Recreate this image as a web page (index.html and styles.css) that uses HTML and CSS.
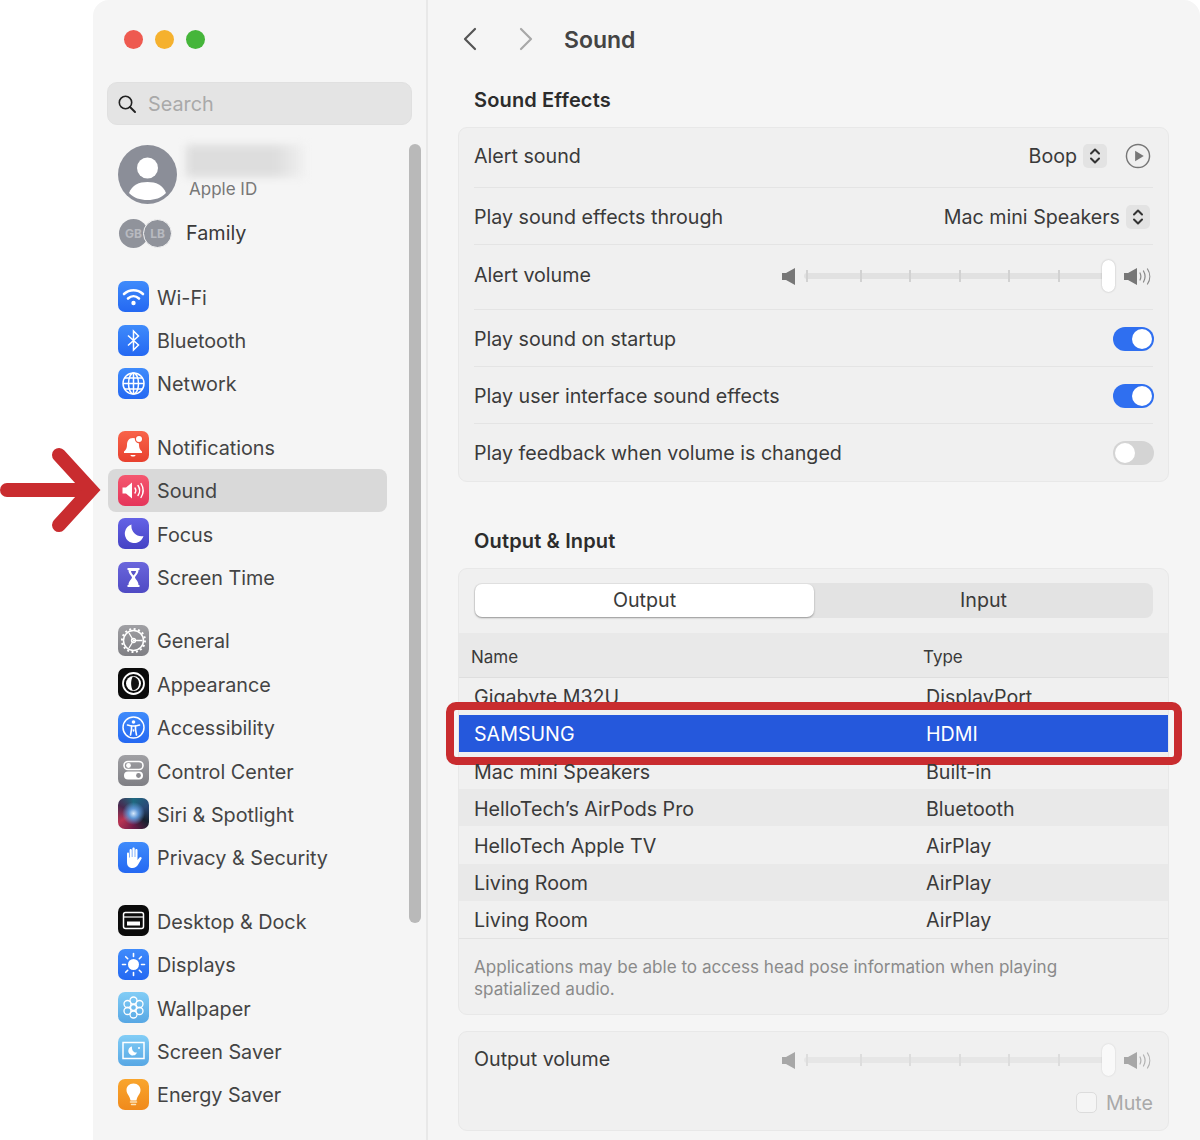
FILE: index.html
```html
<!DOCTYPE html>
<html lang="en">
<head>
    <meta charset="UTF-8">
    <meta name="viewport" content="width=device-width, initial-scale=1.0">
    <title>Sound - System Settings</title>
    <link rel="stylesheet" href="styles.css">
</head>
<body>
    <!-- Red annotation arrow -->
    <svg class="arrow" width="112" height="90" viewBox="0 0 112 90">
        <path d="M7 45H86" fill="none" stroke="#c92c2f" stroke-width="14" stroke-linecap="round"/>
        <path d="M59 10L91 45L59 80" fill="none" stroke="#c92c2f" stroke-width="14" stroke-linecap="round" stroke-linejoin="miter"/>
    </svg>

    <div class="window">
        <!-- Sidebar -->
        <aside class="sidebar">
            <div class="lights">
                <span class="light red"></span>
                <span class="light yellow"></span>
                <span class="light green"></span>
            </div>
            <div class="search">
                <svg width="20" height="20" viewBox="0 0 20 20"><circle cx="8.5" cy="8.5" r="6.2" fill="none" stroke="#222" stroke-width="1.6"/><path d="M13 13l5 5" stroke="#222" stroke-width="2" stroke-linecap="round"/></svg>
                <span>Search</span>
            </div>
            <div class="scrollbar"></div>

            <div class="profile">
                <svg class="avatar" width="59" height="59" viewBox="0 0 59 59">
                    <circle cx="29.5" cy="29.5" r="29.5" fill="#8b8e98"/>
                    <circle cx="29.5" cy="23" r="10.5" fill="#fff"/>
                    <path d="M11 48c3-8 10-11 18.500-11S45 40 48 48c-5 5-11 7-18.500 7S16 53 11 48z" fill="#fff"/>
                </svg>
                <div class="profile-text">
                    <div class="blurred"></div>
                    <div class="apple-id">Apple ID</div>
                </div>
            </div>
            <div class="family">
                <div class="family-faces">
                    <span class="face">GB</span>
                    <span class="face second">LB</span>
                </div>
                <span>Family</span>
            </div>

            <nav class="group">
                <a class="item"><span class="icon blue"><svg viewBox="0 0 31 31"><g fill="none" stroke="#fff" stroke-width="2.6" stroke-linecap="round"><path d="M6 13c5.500-5 13.500-5 19 0"/><path d="M10 17.500c3.300-3 7.700-3 11 0"/></g><circle cx="15.500" cy="22" r="2.200" fill="#fff"/></svg></span>Wi-Fi</a>
                <a class="item"><span class="icon blue"><svg viewBox="0 0 31 31"><path d="M10 10.500L20.500 20L15.500 25V6L20.500 11L10 20.500" fill="none" stroke="#fff" stroke-width="1.500"/></svg></span>Bluetooth</a>
                <a class="item"><span class="icon blue"><svg viewBox="0 0 31 31"><g fill="none" stroke="#fff" stroke-width="1.500"><circle cx="15.500" cy="15.500" r="10.500"/><ellipse cx="15.500" cy="15.500" rx="5" ry="10.500"/><path d="M5 15.500h21M7 10h17M7 21h17M15.500 5v21"/></g></svg></span>Network</a>
            </nav>

            <nav class="group">
                <a class="item"><span class="icon red-orange"><svg viewBox="0 0 31 31"><path d="M15 7c-4.500 0-6 3.500-6 7 0 3-1 5-3 6.500V22h18v-1.500c-2-1.500-3-3.500-3-6.500 0-3.500-1.500-7-6-7z" fill="#fff"/><path d="M12.500 24h5c0 2-5 2-5 0z" fill="#fff"/><circle cx="21" cy="8" r="4.200" fill="#f0543c"/><circle cx="21" cy="8" r="3" fill="#fff"/></svg></span>Notifications</a>
                <a class="item selected"><span class="icon pink"><svg viewBox="0 0 31 31"><path d="M4.500 12.500h3.500l6-5v16l-6-5H4.500z" fill="#fff"/><g fill="none" stroke="#fff" stroke-width="1.400" stroke-linecap="round"><path d="M17 13c1 1.500 1 3.500 0 5"/><path d="M20 10.500c2 3 2 7 0 10"/><path d="M23 8.500c2.800 4.500 2.800 9.500 0 14"/></g></svg></span>Sound</a>
                <a class="item"><span class="icon indigo"><svg viewBox="0 0 31 31"><path d="M13.500 6.500a9.500 9.500 0 1 0 12 11.500c-6.500 1.500-13-4-12-11.500z" fill="#fff"/></svg></span>Focus</a>
                <a class="item"><span class="icon indigo-light"><svg viewBox="0 0 31 31"><path d="M9.500 6h12v2h-1c0 4-3 5.500-3.500 7.500.5 2 3.500 3.500 3.500 7.500h1v2h-12v-2h1c0-4 3-5.500 3.500-7.500-.5-2-3.500-3.500-3.500-7.500h-1z" fill="#fff"/><path d="M13 9h5c0 2-1.500 3-2.500 4.500C14.500 12 13 11 13 9z" fill="#5a55c8"/></svg></span>Screen Time</a>
            </nav>

            <nav class="group">
                <a class="item"><span class="icon gray"><svg viewBox="0 0 31 31"><g fill="none" stroke="#fff"><circle cx="15.500" cy="15.500" r="10" stroke-width="1.500"/><circle cx="15.500" cy="15.500" r="11.500" stroke-width="2" stroke-dasharray="2 2.500"/><path d="M11 8l4.500 7.500h9M15.500 15.500L11 23" stroke-width="1.300"/><circle cx="15.500" cy="15.500" r="2" stroke-width="1.300"/></g></svg></span>General</a>
                <a class="item"><span class="icon black"><svg viewBox="0 0 31 31"><circle cx="15.500" cy="15.500" r="10.500" fill="none" stroke="#fff" stroke-width="1.800"/><circle cx="15.500" cy="15.500" r="7.500" fill="#fff"/><path d="M15 8.500c-2.500 3-2.500 11 0 14c4-1 6-3.500 6-7s-2-6-6-7z" fill="#111"/></svg></span>Appearance</a>
                <a class="item"><span class="icon blue"><svg viewBox="0 0 31 31"><circle cx="15.500" cy="15.500" r="10.500" fill="none" stroke="#fff" stroke-width="1.500"/><circle cx="15.500" cy="10" r="1.800" fill="#fff"/><path d="M9.500 13l4 1v3.500L12.500 23M21.500 13l-4 1v3.500l1 5.500M13.500 14h4M15.500 18v1" fill="none" stroke="#fff" stroke-width="1.600" stroke-linecap="round"/></svg></span>Accessibility</a>
                <a class="item"><span class="icon gray"><svg viewBox="0 0 31 31"><rect x="6" y="6.500" width="19" height="8" rx="4" fill="none" stroke="#fff" stroke-width="1.600"/><circle cx="10.500" cy="10.500" r="2.400" fill="#fff"/><rect x="6" y="16.500" width="19" height="8" rx="4" fill="#fff"/><circle cx="20.500" cy="20.500" r="2.400" fill="#8a8a8f"/></svg></span>Control Center</a>
                <a class="item"><span class="icon siri"></span>Siri &amp; Spotlight</a>
                <a class="item"><span class="icon blue"><svg viewBox="0 0 31 31"><path d="M9 11.500c0-1.500 2-1.500 2 0v4h.6V8c0-1.500 2.200-1.500 2.200 0v7h.6V6.500c0-1.500 2.300-1.500 2.300 0v8.500h.6V8c0-1.500 2.200-1.500 2.200 0v10l2-2.500c1-1.300 2.800 0 2 1.300l-3.500 6c-1 2-3 3.200-5.500 3.200-4 0-5.500-2.500-5.500-6z" fill="#fff"/></svg></span>Privacy &amp; Security</a>
            </nav>

            <nav class="group">
                <a class="item"><span class="icon black"><svg viewBox="0 0 31 31"><rect x="5.500" y="7.500" width="20" height="16" rx="2" fill="none" stroke="#fff" stroke-width="1.500"/><path d="M5.500 12h20" stroke="#fff" stroke-width="1.200"/><rect x="9" y="16.500" width="13" height="4" fill="#fff"/></svg></span>Desktop &amp; Dock</a>
                <a class="item"><span class="icon blue"><svg viewBox="0 0 31 31"><circle cx="15.500" cy="15.500" r="5.500" fill="#fff"/><path d="M15.500 4.500v3M15.500 23.500v3M4.500 15.500h3M23.500 15.500h3M7.700 7.700l2 2M21.300 21.300l2 2M7.700 23.300l2-2M21.300 9.700l2-2" stroke="#fff" stroke-width="1.600" stroke-linecap="round"/></svg></span>Displays</a>
                <a class="item"><span class="icon sky"><svg viewBox="0 0 31 31"><g fill="none" stroke="#fff" stroke-width="1.300"><circle cx="15.500" cy="15.500" r="3"/><circle cx="15.500" cy="8.500" r="3.500"/><circle cx="15.500" cy="22.500" r="3.500"/><circle cx="9.500" cy="12" r="3.500"/><circle cx="21.500" cy="12" r="3.500"/><circle cx="9.500" cy="19" r="3.500"/><circle cx="21.500" cy="19" r="3.500"/></g></svg></span>Wallpaper</a>
                <a class="item"><span class="icon sky"><svg viewBox="0 0 31 31"><rect x="5" y="7.500" width="21" height="16" fill="none" stroke="#fff" stroke-width="1.500"/><path d="M14 11.500a4.500 4.500 0 1 0 5 6c-3 .5-5.500-2-5-6z" fill="#fff"/><circle cx="21" cy="13" r="1" fill="#fff"/></svg></span>Screen Saver</a>
                <a class="item"><span class="icon orange"><svg viewBox="0 0 31 31"><path d="M15.500 4.500c-4.500 0-7 3-7 6.500 0 4 3.500 6 4 10.500h6c.5-4.500 4-6.500 4-10.500 0-3.500-2.500-6.500-7-6.500z" fill="#fff"/><path d="M12.500 23h6M13.500 25.500h4" stroke="#fde2b8" stroke-width="1.500" stroke-linecap="round"/></svg></span>Energy Saver</a>
            </nav>
        </aside>

        <!-- Main Content -->
        <main class="main">
            <div class="toolbar">
                <svg class="chevron" width="14" height="24" viewBox="0 0 14 24"><path d="M12 2L2 12l10 10" fill="none" stroke="#555" stroke-width="2.200" stroke-linecap="round" stroke-linejoin="round"/></svg>
                <svg class="chevron forward" width="14" height="24" viewBox="0 0 14 24"><path d="M2 2l10 10L2 22" fill="none" stroke="#a8a8a8" stroke-width="2.200" stroke-linecap="round" stroke-linejoin="round"/></svg>
                <h1 class="title">Sound</h1>
            </div>

            <h2 class="section-title first">Sound Effects</h2>
            <section class="card">
                <div class="row row-alert">
                    <span>Alert sound</span>
                    <div class="controls">
                        <span>Boop</span>
                        <span class="stepper"><svg width="12" height="18" viewBox="0 0 12 18"><path d="M2 6.500L6 2.500l4 4M2 11.500l4 4 4-4" fill="none" stroke="#333" stroke-width="2" stroke-linecap="round" stroke-linejoin="round"/></svg></span>
                        <svg class="play" width="26" height="26" viewBox="0 0 27 27"><circle cx="13.500" cy="13.500" r="12" fill="none" stroke="#777" stroke-width="1.500"/><path d="M10.500 8l9 5.500-9 5.500z" fill="#777"/></svg>
                    </div>
                </div>
                <div class="row row-through">
                    <span>Play sound effects through</span>
                    <div class="controls tight">
                        <span>Mac mini Speakers</span>
                        <span class="stepper"><svg width="12" height="18" viewBox="0 0 12 18"><path d="M2 6.500L6 2.500l4 4M2 11.500l4 4 4-4" fill="none" stroke="#333" stroke-width="2" stroke-linecap="round" stroke-linejoin="round"/></svg></span>
                    </div>
                </div>
                <div class="row row-volume">
                    <span>Alert volume</span>
                    <div class="volume">
                        <svg width="13" height="17" viewBox="0 0 13 17"><path d="M0 5h4l9-5v17l-9-5H0z" fill="#777"/></svg>
                        <div class="track">
                            <i class="tick first-tick"></i><i class="tick"></i><i class="tick"></i><i class="tick"></i><i class="tick"></i><i class="tick"></i>
                            <b class="thumb"></b>
                        </div>
                        <svg width="27" height="17" viewBox="0 0 27 17"><path d="M0 5h4l9-5v17l-9-5H0z" fill="#777"/><path d="M16 5c1 2 1 5 0 7M19.500 3c2 3.500 2 7.500 0 11M23.500 1c3 4.500 3 10.500 0 15" fill="none" stroke="#888" stroke-width="1.200" stroke-linecap="round"/></svg>
                    </div>
                </div>
                <div class="row">
                    <span>Play sound on startup</span>
                    <span class="toggle on"><b></b></span>
                </div>
                <div class="row">
                    <span>Play user interface sound effects</span>
                    <span class="toggle on"><b></b></span>
                </div>
                <div class="row last">
                    <span>Play feedback when volume is changed</span>
                    <span class="toggle"><b></b></span>
                </div>
            </section>

            <h2 class="section-title">Output &amp; Input</h2>
            <section class="card devices">
                <div class="segmented">
                    <span class="segment active">Output</span>
                    <span class="segment">Input</span>
                </div>
                <div class="table-head">
                    <span class="col-name">Name</span>
                    <span>Type</span>
                </div>
                <div class="table-body">
                    <div class="device"><span class="col-name">Gigabyte M32U</span><span>DisplayPort</span></div>
                    <div class="device current"><span class="col-name">SAMSUNG</span><span>HDMI</span><div class="highlight"></div></div>
                    <div class="device"><span class="col-name">Mac mini Speakers</span><span>Built-in</span></div>
                    <div class="device stripe"><span class="col-name">HelloTech’s AirPods Pro</span><span>Bluetooth</span></div>
                    <div class="device"><span class="col-name">HelloTech Apple TV</span><span>AirPlay</span></div>
                    <div class="device stripe"><span class="col-name">Living Room</span><span>AirPlay</span></div>
                    <div class="device"><span class="col-name">Living Room</span><span>AirPlay</span></div>
                </div>
                <p class="note">Applications may be able to access head pose information when playing spatialized audio.</p>
            </section>

            <section class="card output">
                <div class="row output-row">
                    <span>Output volume</span>
                    <div class="volume dimmed">
                        <svg width="13" height="17" viewBox="0 0 13 17"><path d="M0 5h4l9-5v17l-9-5H0z" fill="#777"/></svg>
                        <div class="track">
                            <i class="tick first-tick"></i><i class="tick"></i><i class="tick"></i><i class="tick"></i><i class="tick"></i><i class="tick"></i>
                            <b class="thumb"></b>
                        </div>
                        <svg width="27" height="17" viewBox="0 0 27 17"><path d="M0 5h4l9-5v17l-9-5H0z" fill="#777"/><path d="M16 5c1 2 1 5 0 7M19.500 3c2 3.500 2 7.500 0 11M23.500 1c3 4.500 3 10.500 0 15" fill="none" stroke="#888" stroke-width="1.200" stroke-linecap="round"/></svg>
                    </div>
                </div>
                <div class="mute">
                    <span class="checkbox"></span>
                    <span>Mute</span>
                </div>
            </section>
        </main>
    </div>
</body>
</html>
```

FILE: styles.css
```css
/* General Styles */
* {
    box-sizing: border-box;
}

html,
body {
    height: 100%;
}

body {
    margin: 0;
    height: 1140px;
    overflow: hidden;
    position: relative;
    background: #fff;
    font-family: Inter, 'Noto Sans', sans-serif;
    font-size: 19.8px;
    color: #3a3a3a;
}

/* Annotation arrow */
.arrow {
    position: absolute;
    top: 445px;
    left: 0;
    z-index: 10;
}

/* Window */
.window {
    margin-left: 93px;
    height: 1140px;
    display: flex;
    background: #f5f5f5;
    border-radius: 16px 16px 0 0;
    overflow: hidden;
}

/* Sidebar */
.sidebar {
    width: 335px;
    flex: none;
    position: relative;
    padding-top: 30px;
    border-right: 2px solid #e8e8e8;
}

.lights {
    display: flex;
    gap: 12px;
    margin-left: 31px;
}

.light {
    width: 19px;
    height: 19px;
    border-radius: 50%;
}

.light.red { background: #ee5a50; }
.light.yellow { background: #f5b12e; }
.light.green { background: #45b53a; }

.search {
    display: flex;
    align-items: center;
    gap: 11px;
    width: 305px;
    height: 43px;
    margin: 33px 0 0 14px;
    padding-left: 9px;
    background: #e4e4e4;
    border: 1px solid #e0e0e0;
    border-radius: 10px;
    color: #a9a9a9;
}

.scrollbar {
    position: absolute;
    top: 144px;
    left: 316px;
    width: 12px;
    height: 779px;
    border-radius: 6px;
    background: #b9b9b9;
}

.profile {
    display: flex;
    gap: 9px;
    margin: 20px 0 0 25px;
}

.avatar {
    flex: none;
}

.blurred {
    width: 118px;
    height: 32px;
    background: linear-gradient(90deg, #dddddd 75%, #f0f0f0);
    filter: blur(4px);
}

.apple-id {
    margin: 2px 0 0 3px;
    font-size: 17px;
    color: #777;
}

.family {
    display: flex;
    align-items: center;
    gap: 14px;
    height: 30px;
    margin: 14px 0 0 26px;
}

.family-faces {
    display: flex;
}

.face {
    display: flex;
    align-items: center;
    justify-content: center;
    width: 29px;
    height: 29px;
    border-radius: 50%;
    background: #90939b;
    color: #b8bac0;
    font-size: 12px;
    font-weight: 700;
}

.face.second {
    margin-left: -5px;
    border: 1px solid #f5f5f5;
}

.group {
    display: flex;
    flex-direction: column;
    width: 279px;
    margin: 20px 0 0 15px;
}

.family + .group {
    margin-top: 27px;
}

.item {
    display: flex;
    align-items: center;
    gap: 8px;
    height: 43.4px;
    padding: 2px 0 0 10px;
    border-radius: 8px;
    color: #444;
}

.item.selected {
    background: #d9d9d9;
}

.icon {
    display: block;
    flex: none;
    width: 31px;
    height: 31px;
    margin-top: -2px;
    border-radius: 7px;
}

.icon svg {
    display: block;
    width: 31px;
    height: 31px;
}

.blue { background: linear-gradient(#3f8bfb, #2468f2); }
.red-orange { background: linear-gradient(#f8644a, #e8402e); }
.pink { background: linear-gradient(#f4576f, #e5355a); }
.indigo { background: linear-gradient(#6462e6, #4542c4); }
.indigo-light { background: linear-gradient(#6a66dc, #4f4ac4); }
.gray { background: linear-gradient(#a0a0a4, #7f7f84); }
.black { background: #0b0b0b; }
.sky { background: linear-gradient(#82cdf6, #57a7e4); }
.orange { background: linear-gradient(#f9a52c, #f08a1c); }
.siri {
    background: radial-gradient(circle, #d5e8fb 0, #5f97d6 22%, rgba(95, 151, 214, 0) 52%),
        conic-gradient(#1e6a80, #2b4a78, #16202e, #6d1b48, #b93352, #49294f, #1e6a80);
}

/* Main Content */
.main {
    flex: 1;
    min-width: 0;
    padding-left: 30px;
    font-size: 19.65px;
}

.toolbar {
    display: flex;
    align-items: center;
    height: 78px;
    padding-left: 5px;
}

.chevron.forward {
    margin-left: 42px;
}

.title {
    margin: 2px 0 0 31px;
    font-size: 23px;
    font-weight: 600;
    color: #444;
}

.section-title {
    margin: 0 0 15px 16px;
    padding-top: 47px;
    font-size: 20px;
    line-height: 24px;
    letter-spacing: 0.15px;
    font-weight: 600;
    color: #2c2c2c;
}

.section-title.first {
    padding-top: 10px;
}

.card {
    width: 711px;
    background: #f0f0f0;
    border: 1px solid #e8e8e8;
    border-radius: 9px;
}

.row {
    display: flex;
    align-items: center;
    justify-content: space-between;
    height: 57.2px;
    margin: 0 15px;
    padding-top: 2px;
    border-bottom: 1px solid #e4e4e4;
}

.row.last {
    height: 56.2px;
    border-bottom: none;
}

.row-alert {
    height: 60px;
    padding-top: 0;
    padding-bottom: 4px;
}

.row-through {
    height: 57px;
}

.row-volume {
    height: 65px;
    padding-top: 0;
    padding-bottom: 5px;
}

.controls {
    display: flex;
    align-items: center;
    gap: 6px;
    margin-right: 2px;
}

.controls.tight {
    margin-right: 3px;
}

.stepper {
    display: flex;
    align-items: center;
    justify-content: center;
    width: 24px;
    height: 24px;
    border-radius: 5px;
    background: #e3e3e3;
}

.play {
    margin-left: 12px;
}

/* Slider */
.volume {
    display: flex;
    align-items: center;
    gap: 9px;
    width: 369px;
    margin: 3px 2px 0 0;
}

.volume svg {
    flex: none;
}

.track {
    flex: 1;
    min-width: 0;
    display: flex;
    align-items: center;
    gap: 47.6px;
    height: 6px;
    padding-left: 1.500px;
    background: #e1e1e1;
    border-radius: 3px;
}

.tick {
    flex: none;
    width: 2px;
    height: 12px;
    background: #d2d2d2;
}

.first-tick {
    margin-right: 4.600px;
}

.thumb {
    flex: none;
    width: 13px;
    height: 32px;
    margin-left: -6px;
    border-radius: 7px;
    background: #fff;
    box-shadow: 0 0 2px rgba(0, 0, 0, 0.25);
}

.dimmed {
    opacity: 0.6;
}

/* Toggles */
.toggle {
    display: flex;
    width: 41px;
    height: 24px;
    margin-right: -1px;
    padding: 2px;
    border-radius: 12px;
    background: #d4d4d4;
}

.toggle b {
    width: 20px;
    height: 20px;
    border-radius: 50%;
    background: #fff;
}

.toggle.on {
    justify-content: flex-end;
    background: #2f6ff0;
}

/* Output & Input */
.devices {
    height: 447px;
}

.segmented {
    display: flex;
    height: 35px;
    margin: 14px 15px 15px;
    background: #e3e3e3;
    border-radius: 8px;
}

.segment {
    flex: 1;
    display: flex;
    align-items: center;
    justify-content: center;
}

.segment.active {
    margin: 1px 0 1px 1px;
    background: #fff;
    border-radius: 7px;
    box-shadow: 0 1px 2px rgba(0, 0, 0, 0.35);
}

.table-head {
    display: flex;
    align-items: center;
    height: 45px;
    padding: 4px 0 0 12px;
    background: #e9e9e9;
    border-bottom: 1px solid #dedede;
    font-size: 17px;
}

.table-head .col-name {
    width: 452px;
}

.table-body {
    border-bottom: 1px solid #e2e2e2;
}

.device {
    display: flex;
    align-items: center;
    position: relative;
    height: 37.2px;
    padding: 2px 0 0 15px;
}

.col-name {
    width: 452px;
}

.stripe {
    background: #e9e9e9;
}

.current {
    background: #2558dc;
    color: #fff;
}

/* Red frame drawn over the selected row */
.highlight {
    position: absolute;
    top: -13px;
    bottom: -13px;
    left: -13px;
    right: -14px;
    border: 8px solid #c92c2f;
    border-radius: 10px;
}

.note {
    max-width: 620px;
    margin: 17px 15px 0;
    font-size: 17.1px;
    line-height: 22px;
    color: #8a8a8a;
}

.output {
    height: 100px;
    margin-top: 16px;
    color: #3a3a3a;
}

.output-row {
    height: 56px;
    padding-top: 0;
    padding-bottom: 2px;
    border-bottom: none;
}

.mute {
    display: flex;
    align-items: center;
    justify-content: flex-end;
    gap: 9px;
    margin: 3px 15px 0 0;
    color: #a9a9a9;
}

.checkbox {
    width: 21px;
    height: 21px;
    border: 1px solid #dcdcdc;
    border-radius: 5px;
    background: #f5f5f5;
}
```
